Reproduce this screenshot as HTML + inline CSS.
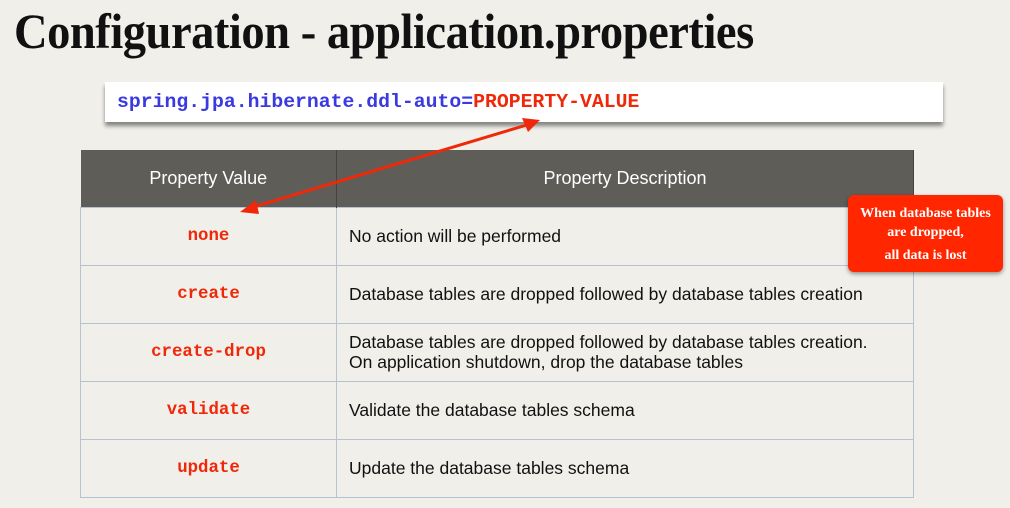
<html><head><style>
body{margin:0;width:1010px;height:508px;background:#f1efea;position:relative;overflow:hidden;font-family:"Liberation Sans",sans-serif}
.t{position:absolute;left:14px;top:2px;font:bold 50px "Liberation Serif",serif;transform:scaleX(0.93);transform-origin:left;white-space:nowrap;color:#111;letter-spacing:-0.5px}
.code{position:absolute;left:105px;top:82px;width:838px;height:40px;background:#fff;box-shadow:0 4px 4px rgba(0,0,0,.45);font:bold 19.8px "Liberation Mono",monospace;line-height:40px;padding-left:12px;box-sizing:border-box;color:#3a3ae0}
.code span{color:#f0280a}
table{position:absolute;left:80px;top:150px;border-collapse:collapse;width:834px;table-layout:fixed}
th{background:#5f5d58;color:#fff;font-weight:normal;font-size:18px;height:57px;border-right:1px solid #454340}
td{height:58px;border:1px solid #b8c0d4;font-size:17.5px;color:#111;padding:0 12px;line-height:20px}
td.v{text-align:center;font:bold 17.4px "Liberation Mono",monospace;color:#f0280a}
.call{position:absolute;left:848px;top:195px;width:155px;height:77px;background:#ff2600;border-radius:6px;box-shadow:0 2px 4px rgba(0,0,0,.4);color:#fff;font:bold 14px "Liberation Serif",serif;text-align:center;line-height:19px;padding-top:9px;box-sizing:border-box}
</style></head><body>
<div class="t">Configuration - application.properties</div>
<div class="code">spring.jpa.hibernate.ddl-auto=<span>PROPERTY-VALUE</span></div>
<table>
<colgroup><col style="width:256px"><col></colgroup>
<tr><th>Property Value</th><th>Property Description</th></tr>
<tr><td class="v">none</td><td>No action will be performed</td></tr>
<tr><td class="v">create</td><td>Database tables are dropped followed by database tables creation</td></tr>
<tr><td class="v">create-drop</td><td>Database tables are dropped followed by database tables creation.<br>On application shutdown, drop the database tables</td></tr>
<tr><td class="v">validate</td><td>Validate the database tables schema</td></tr>
<tr><td class="v">update</td><td>Update the database tables schema</td></tr>
</table>
<svg style="position:absolute;left:0;top:0" width="1010" height="508">
<line x1="530" y1="124" x2="250" y2="208" stroke="#f0280a" stroke-width="3"/>
<polygon points="540,120 522,118 528,132" fill="#f0280a"/>
<polygon points="240,212 256,200 259,214" fill="#f0280a"/>
</svg>
<div class="call">When database tables<br>are dropped,<div style="margin-top:4px">all data is lost</div></div>
</body></html>
